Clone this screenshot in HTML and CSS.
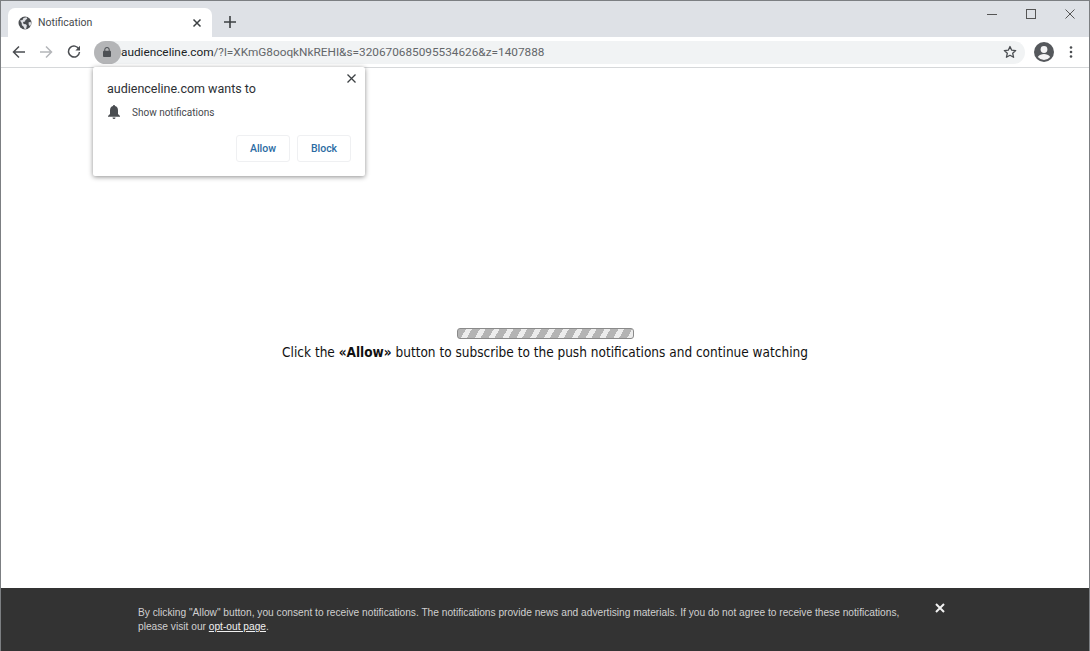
FILE: index.html
```html
<!DOCTYPE html>
<html lang="en">
<head>
<meta charset="utf-8">
<title>Notification</title>
<link rel="stylesheet" href="styles.css">
</head>
<body>
<div class="window">
  <header class="tabstrip">
    <div class="tab">
      <svg class="globe" width="14" height="14" viewBox="0 0 14 14"><circle cx="7" cy="7" r="6.5" fill="#4a4d51"/><path d="M2 4.5l2.500-.5 1-2 3-.8.800 1.600-1.800 1.200-.5 1.500-2 .5.600 2 2.300.3 1 1.300-.7 2.800-1.300 1-1.500-3-1.500-1.200-.2-2.200zM10.500 6.500l2-.8.800 2-1.200 2.500-1.300-1.200z" fill="#dfe1e5"/></svg>
      <span class="tab-title">Notification</span>
      <svg class="tab-close" width="10" height="10" viewBox="0 0 10 10"><path d="M1.500 1.500l7 7M8.500 1.500l-7 7" stroke="#3c4043" stroke-width="1.500"/></svg>
    </div>
    <svg class="newtab" width="12" height="12" viewBox="0 0 12 12"><path d="M6 0v12M0 6h12" stroke="#3c4043" stroke-width="1.600"/></svg>
    <div class="winctl">
      <svg width="10" height="10" viewBox="0 0 10 10"><path d="M0 5.500h10" stroke="#555" stroke-width="1"/></svg>
      <svg width="10" height="10" viewBox="0 0 10 10"><rect x=".5" y=".5" width="9" height="9" fill="none" stroke="#555"/></svg>
      <svg width="10" height="10" viewBox="0 0 10 10"><path d="M.5.5l9 9M9.500.5l-9 9" stroke="#555"/></svg>
    </div>
  </header>
  <nav class="toolbar">
    <svg class="navicon" width="14" height="14" viewBox="0 0 14 14"><path d="M13 7H2M7 1.500L1.500 7 7 12.500" fill="none" stroke="#4a4d51" stroke-width="1.500"/></svg>
    <svg class="navicon" width="14" height="14" viewBox="0 0 14 14"><path d="M1 7h11M7 1.500L12.500 7 7 12.500" fill="none" stroke="#b4b6b9" stroke-width="1.500"/></svg>
    <svg class="navicon" width="14" height="14" viewBox="0 0 14 14"><path d="M12 4.200A5.500 5.500 0 1 0 12.500 7" fill="none" stroke="#4a4d51" stroke-width="1.500"/><path d="M13 .8v4.600H8.400z" fill="#4a4d51"/></svg>
    <div class="omnibox">
      <span class="lockpill"><svg width="8" height="10" viewBox="0 0 9 11"><rect y="4" width="9" height="7" rx="1" fill="#4d5054"/><path d="M2 4.500V3a2.500 2.500 0 0 1 5 0v1.500" fill="none" stroke="#4d5054" stroke-width="1.200"/></svg></span>
      <span class="url"><span class="host">audienceline.com</span><span class="path">/?l=XKmG8ooqkNkREHI&amp;s=320670685095534626&amp;z=1407888</span></span>
      <svg class="star" width="14" height="14" viewBox="0 0 14 14"><path d="M7 1.500l1.700 3.700 4 .4-3 2.700.9 4L7 10.300l-3.600 2 .9-4-3-2.700 4-.4z" fill="none" stroke="#4a4d51" stroke-width="1.300" stroke-linejoin="round"/></svg>
    </div>
    <svg class="avatar" width="20" height="20" viewBox="0 0 20 20"><circle cx="10" cy="10" r="10" fill="#55585c"/><circle cx="10" cy="7.500" r="3.400" fill="#f4f4f5"/><path d="M3.800 15c1.500-2.300 3.800-3 6.200-3s4.700.7 6.200 3a8 8 0 0 1-12.400 0z" fill="#f4f4f5"/></svg>
    <svg class="menu" width="4" height="12" viewBox="0 0 4 12"><circle cx="2" cy="1.500" r="1.300" fill="#4a4d51"/><circle cx="2" cy="6" r="1.300" fill="#4a4d51"/><circle cx="2" cy="10.500" r="1.300" fill="#4a4d51"/></svg>
  </nav>
  <main class="page">
    <div class="progress"></div>
    <p class="message">Click the <b>«Allow»</b> button to subscribe to the push notifications and continue watching</p>
  </main>
  <footer class="consent">
    <p class="consent-text">By clicking "Allow" button, you consent to receive notifications. The notifications provide news and advertising materials. If you do not agree to receive these notifications, please visit our <a href="#">opt-out page</a>.</p>
    <svg class="consent-close" width="10" height="10" viewBox="0 0 10 10"><path d="M1 1l8 8M9 1l-8 8" stroke="#f2f2f2" stroke-width="2"/></svg>
  </footer>
  <aside class="prompt">
    <svg class="prompt-close" width="9" height="9" viewBox="0 0 9 9"><path d="M.5.5l8 8M8.500.5l-8 8" stroke="#3c4043" stroke-width="1.300"/></svg>
    <h1 class="prompt-title">audienceline.com wants to</h1>
    <div class="prompt-row">
      <svg width="12" height="14" viewBox="0 0 12 14"><path d="M6 0c.7 0 1 .5 1 1.100C9 1.600 10 3.300 10 5.500V9l2 2v.8H0V11l2-2V5.500C2 3.300 3 1.600 5 1.100 5 .5 5.300 0 6 0zM4.500 12.500h3A1.500 1.500 0 0 1 4.500 12.500z" fill="#4a4d51"/></svg>
      <span>Show notifications</span>
    </div>
    <div class="prompt-actions">
      <button class="prompt-btn">Allow</button>
      <button class="prompt-btn">Block</button>
    </div>
  </aside>
</div>
</body>
</html>
```
FILE: styles.css
```css
* { box-sizing: border-box; }
html, body { margin: 0; height: 100%; overflow: hidden; }
body { background: #fff; }
.window {
  position: relative;
  width: 1090px;
  height: 651px;
  display: flex;
  flex-direction: column;
  border: 1px solid #7c7f82;
  border-bottom: 0;
  font-family: "Roboto", "Open Sans", sans-serif;
}
.tabstrip {
  height: 36px;
  background: #dee1e6;
  display: flex;
  align-items: flex-end;
  padding-left: 7px;
  flex: none;
}
.tab {
  width: 204px;
  height: 29px;
  background: #fff;
  border-radius: 7px 7px 0 0;
  display: flex;
  align-items: center;
  padding: 0 10px 0 10px;
  gap: 6px;
}
.globe { flex: none; }
.tab-title { flex: 1; font-size: 10.500px; color: #45484c; }
.newtab { margin: 0 0 9px 12px; }
.winctl {
  margin-left: auto;
  align-self: flex-start;
  display: flex;
  gap: 29px;
  padding: 8px 14px 0 0;
}
.toolbar {
  height: 31px;
  background: #fff;
  border-bottom: 1px solid #d6d8da;
  display: flex;
  align-items: center;
  padding: 0 13px 0 11px;
  flex: none;
}
.navicon { margin-right: 13.330px; }
.omnibox {
  height: 23px;
  width: 931px;
  background: #f1f3f4;
  border-radius: 12px;
  display: flex;
  align-items: center;
  padding-right: 8px;
}
.lockpill {
  width: 27px;
  height: 23px;
  border-radius: 12px;
  background: #b4b5b7;
  display: flex;
  align-items: center;
  justify-content: center;
  flex: none;
}
.url { flex: 1; font-size: 11.800px; white-space: nowrap; }
.host { color: #202326; }
.path { color: #63666a; }
.avatar { margin-left: 9px; }
.menu { margin-left: 15px; }
.page {
  flex: 1;
  display: flex;
  flex-direction: column;
  align-items: center;
  padding-top: 260px;
  background: #fff;
}
.progress {
  width: 177px;
  height: 11px;
  border: 1px solid #8a8a8a;
  border-radius: 3px;
  background: repeating-linear-gradient(120deg, #b4b4b4 0 7px, #ececec 7px 12px);
}
.message {
  margin: 3px 0 0;
  font-family: "DejaVu Sans", Verdana, sans-serif;
  font-stretch: condensed;
  font-size: 13.500px;
  line-height: 20px;
  color: #111;
}
.consent {
  height: 63px;
  flex: none;
  background: #333;
  display: flex;
  align-items: flex-start;
  padding: 16px 0 0 137px;
}
.consent-text {
  margin: 2px 0 0;
  width: 770px;
  font-family: "Liberation Sans", Arial, sans-serif;
  font-size: 10.200px;
  line-height: 14px;
  color: #d0d0d0;
}
.consent-text a { color: #f0f0f0; }
.consent-close { margin: -1px 0 0 27px; }
.prompt {
  position: absolute;
  left: 92px;
  top: 66px;
  width: 272px;
  height: 109px;
  background: #fff;
  border-radius: 2px;
  box-shadow: 0 1px 5px rgba(0, 0, 0, .45);
  padding: 13px 14px 0 14px;
  display: flex;
  flex-direction: column;
}
.prompt-close { position: absolute; top: 7px; right: 9px; }
.prompt-title {
  margin: 0;
  font-size: 12.500px;
  line-height: 18px;
  font-weight: 400;
  color: #2d3034;
}
.prompt-row {
  display: flex;
  align-items: center;
  gap: 12px;
  margin-top: 7px;
  padding-left: 1px;
  font-size: 10px;
  color: #45484c;
}
.prompt-actions {
  display: flex;
  justify-content: flex-end;
  gap: 7px;
  margin-top: 16px;
}
.prompt-btn {
  width: 54px;
  height: 27px;
  background: #fff;
  border: 1px solid #eff0f2;
  border-radius: 3px;
  font-family: inherit;
  font-size: 10.500px;
  font-weight: 500;
  color: #2b6ca3;
  padding: 0;
}
```
